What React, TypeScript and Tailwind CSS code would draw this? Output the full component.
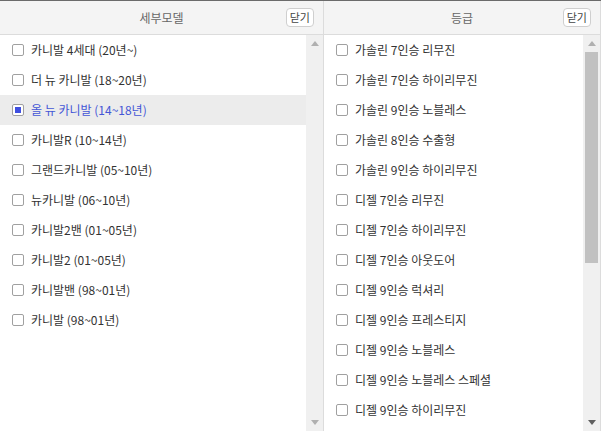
import React from "react";

const models = [
    "카니발 4세대 (20년~)",
    "더 뉴 카니발 (18~20년)",
    "올 뉴 카니발 (14~18년)",
    "카니발R (10~14년)",
    "그랜드카니발 (05~10년)",
    "뉴카니발 (06~10년)",
    "카니발2밴 (01~05년)",
    "카니발2 (01~05년)",
    "카니발밴 (98~01년)",
    "카니발 (98~01년)",
];

const grades = [
    "가솔린 7인승 리무진",
    "가솔린 7인승 하이리무진",
    "가솔린 9인승 노블레스",
    "가솔린 8인승 수출형",
    "가솔린 9인승 하이리무진",
    "디젤 7인승 리무진",
    "디젤 7인승 하이리무진",
    "디젤 7인승 아웃도어",
    "디젤 9인승 럭셔리",
    "디젤 9인승 프레스티지",
    "디젤 9인승 노블레스",
    "디젤 9인승 노블레스 스페셜",
    "디젤 9인승 하이리무진",
];

const font = { fontFamily: '"Malgun Gothic", "Noto Sans CJK KR", "Liberation Sans", sans-serif' };

function Arrow({ up, dark }: { up?: boolean; dark?: boolean }) {
    return (
        <svg width="8" height="5" viewBox="0 0 8 5">
            <polygon
                points={up ? "0,5 8,5 4,0" : "0,0 8,0 4,5"}
                fill={dark ? "#606060" : "#b0b0b0"}
            />
        </svg>
    );
}

function Row({ label, checked }: { label: string; checked?: boolean }) {
    return (
        <div
            className={`flex items-center h-[30px] pl-[12px] ${
                checked ? "bg-[#ececec] text-[#4456d6]" : "text-[#333]"
            }`}
        >
            <span className="w-[12px] h-[12px] border border-[#a0a0a0] rounded-[2px] bg-white flex items-center justify-center mr-[7px]">
                {checked && <span className="w-[6px] h-[6px] bg-[#3f4fe0]" />}
            </span>
            <span className="text-[12px] leading-none">{label}</span>
        </div>
    );
}

function Header({ title }: { title: string }) {
    return (
        <div className="relative h-[34px] bg-[#f4f4f4] border-b border-[#dcdcdc] flex items-center justify-center">
            <span className="text-[12px] text-[#666]">{title}</span>
            <button className="absolute right-[9px] top-[7px] h-[19px] px-[3px] bg-white border border-[#cfcfcf] rounded-[4px] text-[11px] text-[#444] leading-none">
                닫기
            </button>
        </div>
    );
}

export default function App() {
    return (
        <div className="w-[601px] h-[431px] border-t border-[#6b6b6b] flex bg-white overflow-hidden" style={font}>
            <div className="w-[324px] border-r border-[#dcdcdc] flex flex-col">
                <Header title="세부모델" />
                <div className="flex flex-1 min-h-0">
                    <div className="flex-1">
                        {models.map((m, i) => (
                            <Row key={m} label={m} checked={i === 2} />
                        ))}
                    </div>
                    <div className="w-[17px] bg-[#f0f0f0] flex flex-col items-center justify-between py-[6px]">
                        <Arrow up />
                        <Arrow />
                    </div>
                </div>
            </div>
            <div className="flex-1 flex flex-col border-r border-[#dcdcdc]">
                <Header title="등급" />
                <div className="flex flex-1 min-h-0">
                    <div className="flex-1 overflow-hidden">
                        {grades.map((g) => (
                            <Row key={g} label={g} />
                        ))}
                    </div>
                    <div className="w-[17px] bg-[#f0f0f0] flex flex-col items-center py-[6px]">
                        <Arrow up />
                        <div className="w-[13px] h-[211px] bg-[#c1c1c1] mt-[6px]" />
                        <div className="flex-1" />
                        <Arrow dark />
                    </div>
                </div>
            </div>
        </div>
    );
}
